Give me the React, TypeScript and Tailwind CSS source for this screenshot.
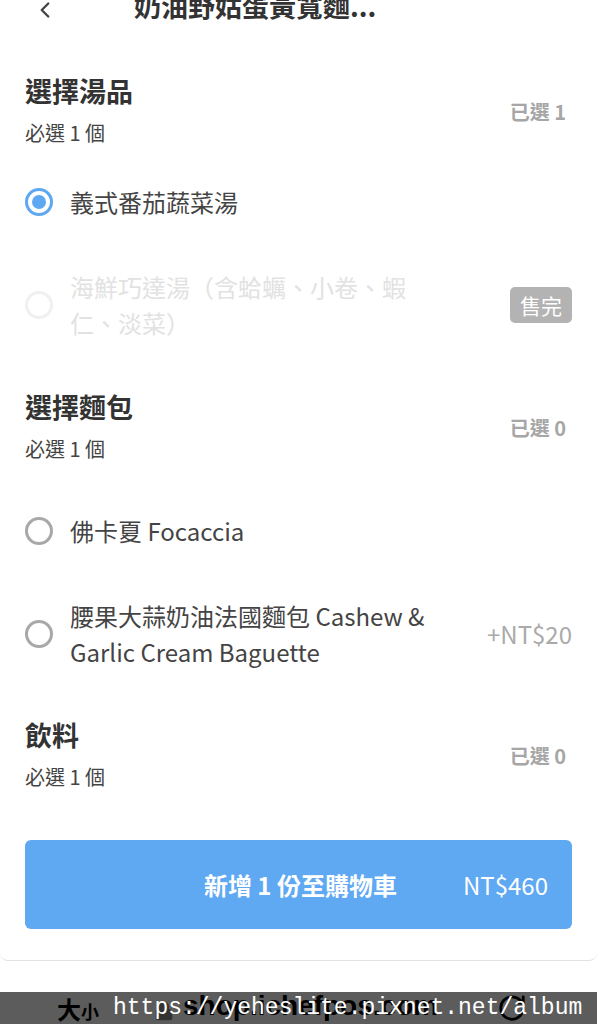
import { ChevronLeft, Lock, RotateCw } from "lucide-react";

type Option = {
  label: string[];
  price?: string;
  selected?: boolean;
  soldOut?: boolean;
  rowClass: string;
};

type Group = {
  title: string;
  picked: number;
  topClass: string;
  options: Option[];
};

const groups: Group[] = [
  {
    title: "選擇湯品",
    picked: 1,
    topClass: "mt-[49px]",
    options: [
      { label: ["義式番茄蔬菜湯"], selected: true, rowClass: "h-[102px]" },
      {
        label: ["海鮮巧達湯（含蛤蠣、小卷、蝦", "仁、淡菜）"],
        soldOut: true,
        rowClass: "h-[104px]",
      },
    ],
  },
  {
    title: "選擇麵包",
    picked: 0,
    topClass: "mt-[32px]",
    options: [
      { label: ["佛卡夏 Focaccia"], rowClass: "h-[127px]" },
      {
        label: ["腰果大蒜奶油法國麵包 Cashew &", "Garlic Cream Baguette"],
        price: "+NT$20",
        rowClass: "h-[80px]",
      },
    ],
  },
  {
    title: "飲料",
    picked: 0,
    topClass: "mt-[43px]",
    options: [],
  },
];

function Radio({ selected, soldOut }: { selected?: boolean; soldOut?: boolean }) {
  if (selected) {
    return (
      <span className="flex h-[28px] w-[28px] shrink-0 items-center justify-center rounded-full border-[3px] border-[#5ea8f2]">
        <span className="h-[14px] w-[14px] rounded-full bg-[#5ea8f2]" />
      </span>
    );
  }
  return (
    <span
      className={
        soldOut
          ? "h-[28px] w-[28px] shrink-0 rounded-full border-[3px] border-[#f0f0f0]"
          : "h-[28px] w-[28px] shrink-0 rounded-full border-[3px] border-[#a8a8a8]"
      }
    />
  );
}

function OptionRow({ option }: { option: Option }) {
  return (
    <div className={`flex items-center pr-[25px] pl-[25px] ${option.rowClass}`}>
      <Radio selected={option.selected} soldOut={option.soldOut} />
      <div
        className={
          option.soldOut
            ? "ml-[17px] flex-1 text-[24px] leading-[36px] text-[#e2e2e2]"
            : "ml-[17px] flex-1 text-[24px] leading-[36px] text-[#444]"
        }
      >
        {option.label.map((line) => (
          <div key={line}>{line}</div>
        ))}
      </div>
      {option.soldOut && (
        <span className="rounded-[5px] bg-[#b3b3b3] px-[10px] text-[21px] leading-[36px] text-white">
          售完
        </span>
      )}
      {option.price && (
        <span className="text-[24px] leading-[36px] text-[#aaaaaa]">{option.price}</span>
      )}
    </div>
  );
}

export default function App() {
  return (
    <div
      className="relative w-[597px] h-[1024px] overflow-hidden bg-white"
      style={{ fontFamily: '"Noto Sans CJK TC", "Noto Sans", sans-serif' }}
    >
      <div className="flex flex-col rounded-b-[8px] border-b border-[#e2e2e2] bg-white h-[961px]">
        <div className="-mt-[12px] flex h-[36px] items-center">
          <ChevronLeft className="ml-[32px] mt-[7px] h-[26px] w-[26px] text-[#444]" strokeWidth={2.2} />
          <div className="ml-[76px] text-[27px] font-bold leading-[36px] text-[#333]">
            奶油野姑蛋黃寬麵...
          </div>
        </div>

        {groups.map((g) => (
          <div key={g.title} className={g.topClass}>
            <div className="flex items-center justify-between pr-[31px] pl-[25px]">
              <div>
                <div className="text-[27px] font-bold leading-[36px] text-[#333]">{g.title}</div>
                <div className="mt-[6px] text-[20px] leading-[36px] text-[#444]">必選 1 個</div>
              </div>
              <div className="text-[20px] font-bold text-[#a6a6a6]">已選 {g.picked}</div>
            </div>
            {g.options.map((o) => (
              <OptionRow key={o.label[0]} option={o} />
            ))}
          </div>
        ))}

        <div className="mx-[25px] mt-[45px] flex h-[89px] items-center justify-end gap-[66px] rounded-[6px] bg-[#5fa8f2] pr-[24px] text-white">
          <span className="text-[24px] font-bold">新增 1 份至購物車</span>
          <span className="text-[24px]">NT$460</span>
        </div>
      </div>

      <div className="h-[31px] bg-white" />

      <div className="relative flex h-[32px] items-start overflow-hidden bg-[#5c5c5c]">
        <div className="ml-[57px] mt-[4px] flex items-end font-bold text-black">
          <span className="text-[24px] leading-[26px]">大</span>
          <span className="text-[18px] leading-[22px]">小</span>
        </div>
        <Lock className="ml-[55px] mt-[8px] h-[22px] w-[20px] text-[#333]" fill="#333" strokeWidth={2} />
        <span
          className="ml-[9px] text-[28px] font-bold leading-[28px] text-black"
          style={{ fontFamily: '"Liberation Sans", Arial, sans-serif' }}
        >
          shop.ichefpos.com
        </span>
        <RotateCw className="ml-[59px] mt-[1px] h-[30px] w-[30px] text-black" strokeWidth={2.2} />
        <span
          className="absolute top-[2px] left-[113px] text-[23px] leading-[28px] text-white"
          style={{ fontFamily: '"Liberation Mono", "Courier New", monospace' }}
        >
          https://yeheslite.pixnet.net/album
        </span>
      </div>
    </div>
  );
}
